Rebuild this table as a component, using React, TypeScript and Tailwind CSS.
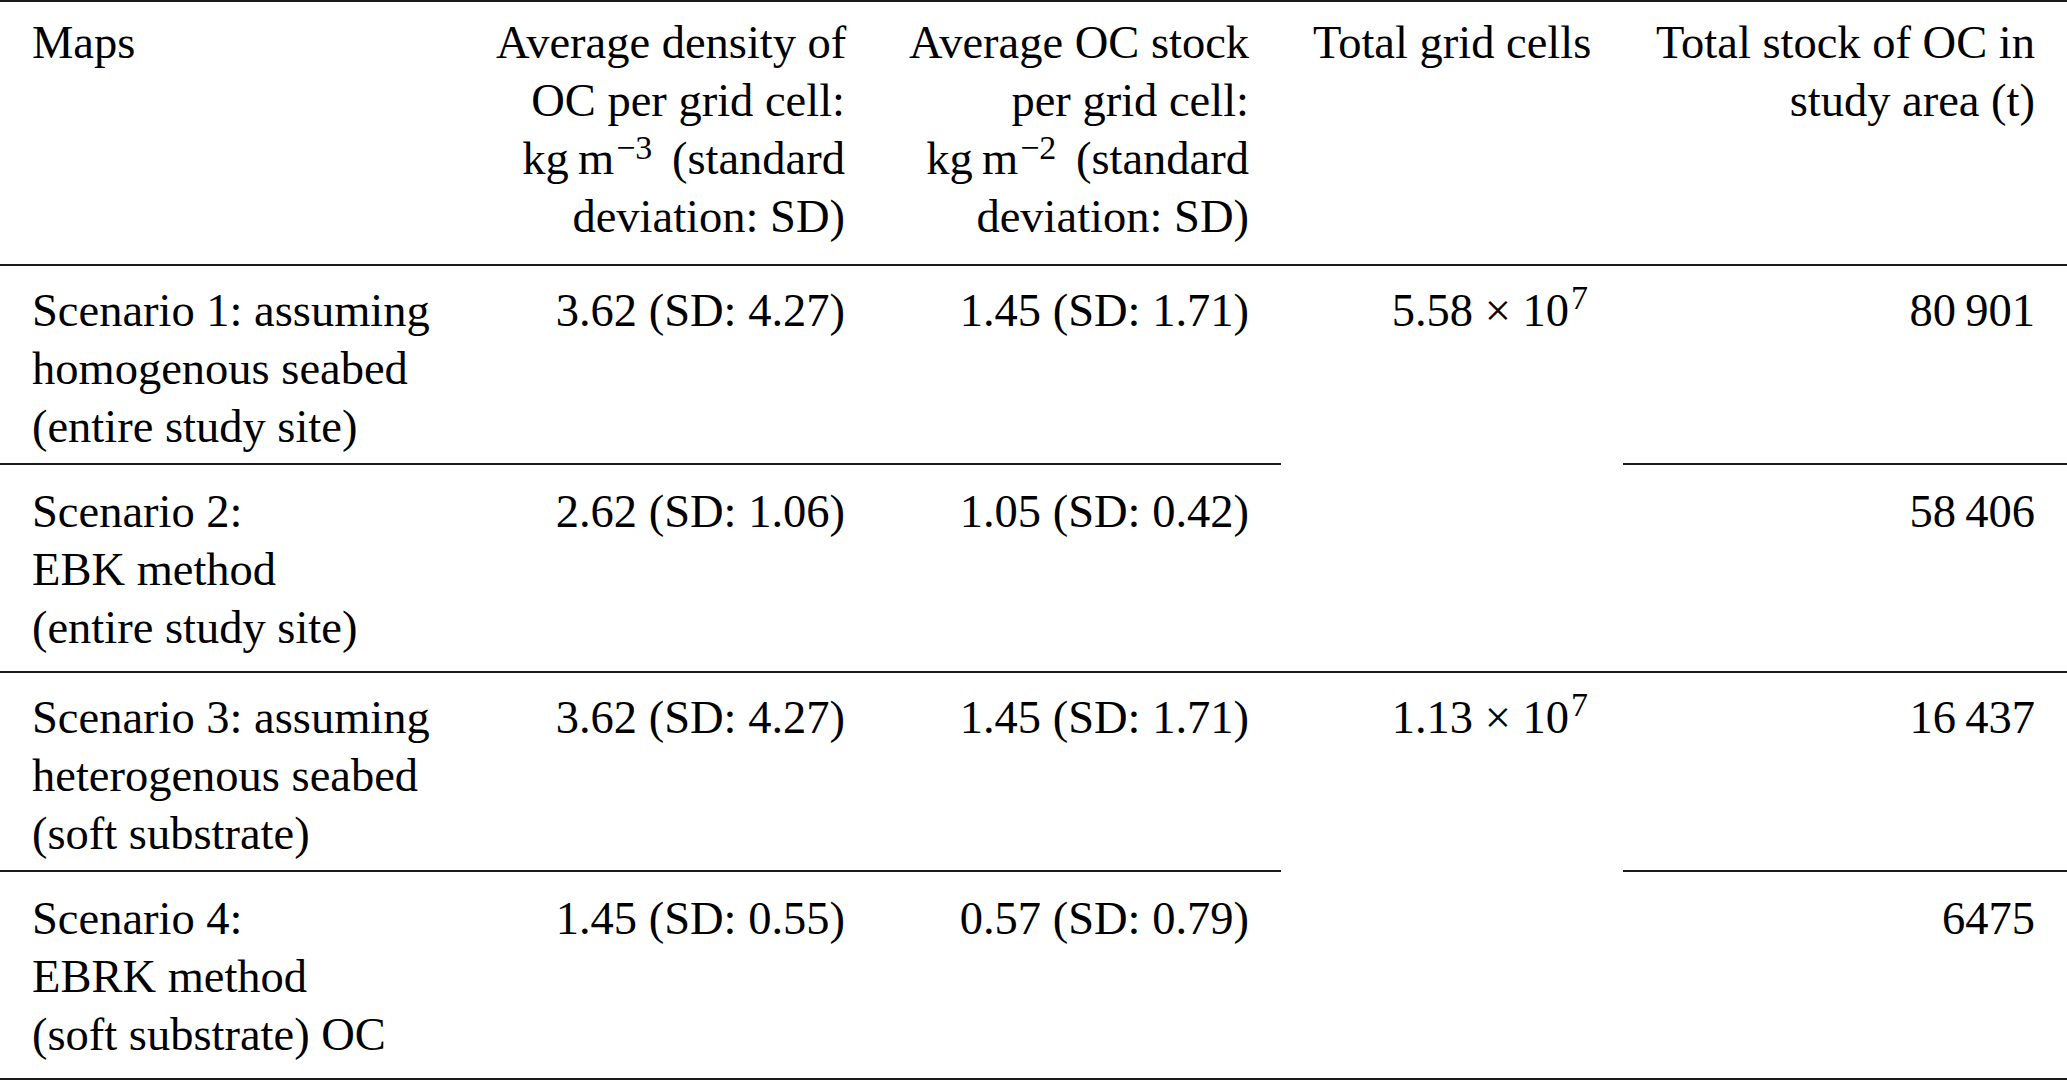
import React from "react"

const font = { fontFamily: '"Liberation Serif", "Times New Roman", serif' }

function Sup({ children, className = "" }: { children: React.ReactNode; className?: string }) {
  return <span className={`relative text-[34px] leading-none ${className}`}>{children}</span>
}

type Row = {
  name: string[]
  density: string
  stock: string
  total: string
  pt: string
}

const rows: Row[] = [
  {
    name: ["Scenario 1: assuming", "homogenous seabed", "(entire study site)"],
    density: "3.62 (SD: 4.27)",
    stock: "1.45 (SD: 1.71)",
    total: "80\u2009901",
    pt: "pt-[16px]",
  },
  {
    name: ["Scenario 2:", "EBK method", "(entire study site)"],
    density: "2.62 (SD: 1.06)",
    stock: "1.05 (SD: 0.42)",
    total: "58\u2009406",
    pt: "pt-[18px]",
  },
  {
    name: ["Scenario 3: assuming", "heterogenous seabed", "(soft substrate)"],
    density: "3.62 (SD: 4.27)",
    stock: "1.45 (SD: 1.71)",
    total: "16\u2009437",
    pt: "pt-[16px]",
  },
  {
    name: ["Scenario 4:", "EBRK method", "(soft substrate) OC"],
    density: "1.45 (SD: 0.55)",
    stock: "0.57 (SD: 0.79)",
    total: "6475",
    pt: "pt-[18px]",
  },
]

const gridCells = ["5.58", "1.13"]

export default function App() {
  const line = "border-b-2 border-[#1a1a1a]"
  return (
    <div className="w-[2067px] h-[1082px] bg-white text-black" style={font}>
      <div className="grid grid-cols-[464px_413px_404px_342px_444px] grid-rows-[264px_199px_208px_199px_208px] border-t-2 border-[#1a1a1a] text-[46.5px] leading-[58px] whitespace-nowrap">
        {/* header */}
        <div className={`${line} px-8 pt-[12px]`}>Maps</div>
        <div className={`${line} px-8 pt-[12px] text-right`}>
          <div>Average density of</div>
          <div>OC per grid cell:</div>
          <div>
            kg{"\u2009"}m<Sup className="-top-[15px] ml-[2px] mr-[8px]">−3</Sup> (standard
          </div>
          <div>deviation: SD)</div>
        </div>
        <div className={`${line} px-8 pt-[12px] text-right`}>
          <div>Average OC stock</div>
          <div>per grid cell:</div>
          <div>
            kg{"\u2009"}m<Sup className="-top-[15px] ml-[2px] mr-[8px]">−2</Sup> (standard
          </div>
          <div>deviation: SD)</div>
        </div>
        <div className={`${line} px-8 pt-[12px] text-right`}>Total grid cells</div>
        <div className={`${line} px-8 pt-[12px] text-right`}>
          <div>Total stock of OC in</div>
          <div>study area (t)</div>
        </div>

        {rows.map((r, i) => (
          <React.Fragment key={i}>
            <div className={`${line} px-8 ${r.pt}`}>
              {r.name.map((n) => (
                <div key={n}>{n}</div>
              ))}
            </div>
            <div className={`${line} px-8 ${r.pt} text-right`}>{r.density}</div>
            <div className={`${line} px-8 ${r.pt} text-right`}>{r.stock}</div>
            {i % 2 === 0 && (
              <div className={`${line} row-span-2 px-8 ${r.pt} text-right`}>
                <span className="mr-[3px]">
                  {gridCells[i / 2]} × 10<Sup className="-top-[17px] ml-[2px]">7</Sup>
                </span>
              </div>
            )}
            <div className={`${line} px-8 ${r.pt} text-right`}>{r.total}</div>
          </React.Fragment>
        ))}
      </div>
    </div>
  )
}
